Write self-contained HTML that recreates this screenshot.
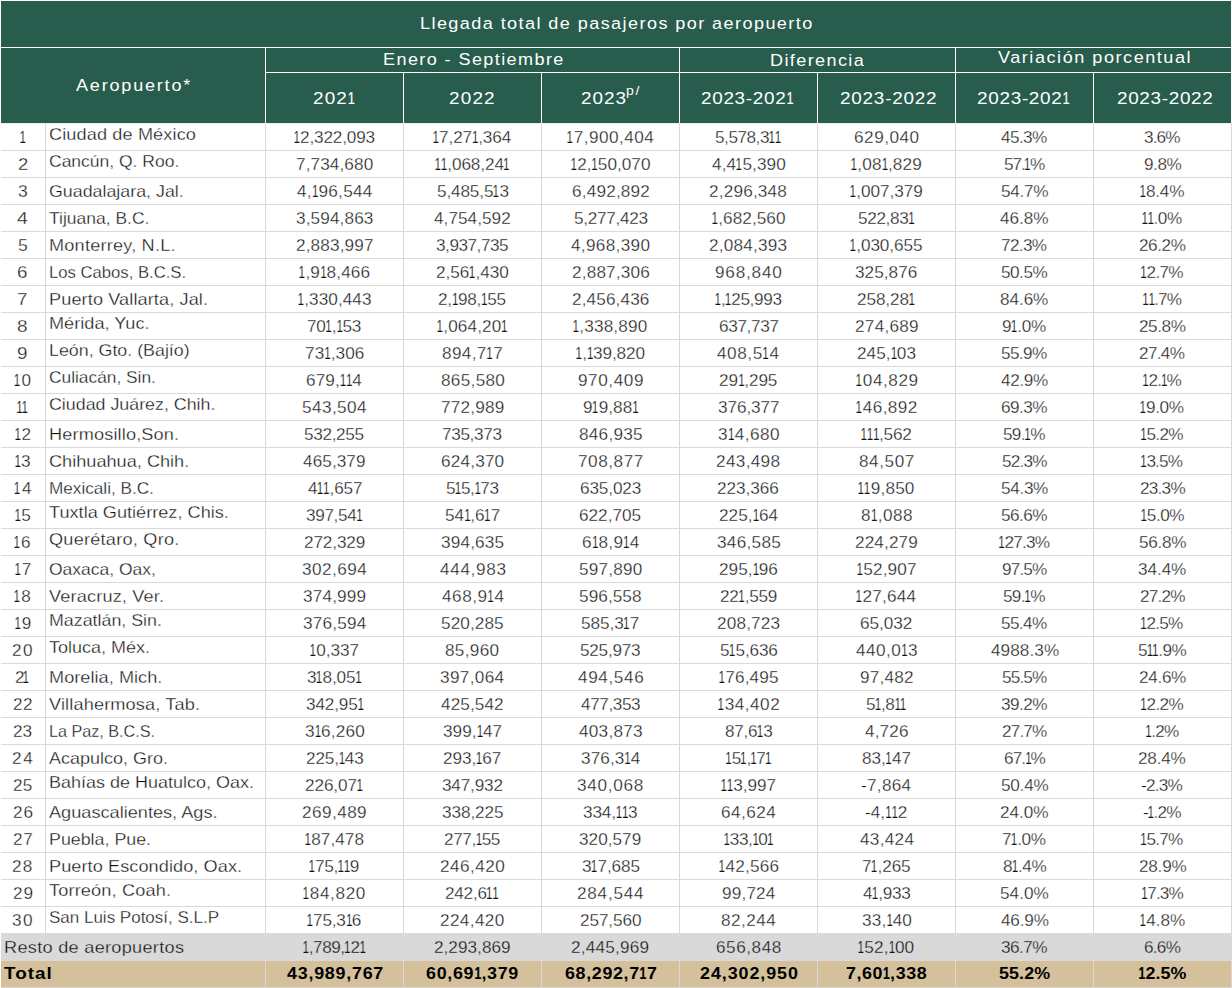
<!DOCTYPE html>
<html lang="es"><head><meta charset="utf-8"><title>Llegada total de pasajeros por aeropuerto</title>
<style>
html,body{margin:0;padding:0;background:#fff}
#t{position:relative;width:1232px;height:988px;overflow:hidden;background:#fff;color:#111111}
#t div{position:absolute}
#t span{position:absolute;white-space:nowrap;line-height:20px;transform-origin:0 50%}
.g{background:#285c4d}.w{background:#fff}.l{background:#d9d9d9}
#t i{display:inline-block;font-style:normal;transform:scaleX(0.68);margin:0 -0.09em 0 -0.105em;-webkit-text-stroke-width:.22px}
#t{font-family:'Liberation Sans',sans-serif}
.head{font-size:17.2px;color:#fff}.sup{font-size:12.5px;color:#fff}
.data,.label{font-size:16.5px;-webkit-text-stroke:0.3px #fff}.label{color:#111111}.rs{-webkit-text-stroke-color:#d9d9d9}.tot,.tlabel{font-size:17.2px;font-weight:bold;color:#000}
</style></head><body>
<div id="t">
<div class="g" style="left:0px;top:0px;width:1232px;height:123px"></div>
<div class="w" style="left:0px;top:0px;width:1232px;height:1px"></div>
<div class="w" style="left:0px;top:0px;width:1px;height:123px"></div>
<div class="w" style="left:1231px;top:0px;width:1px;height:123px"></div>
<div class="w" style="left:0px;top:47px;width:1232px;height:1px"></div>
<div class="w" style="left:265px;top:72px;width:967px;height:1px"></div>
<div class="w" style="left:265px;top:47px;width:1px;height:76px"></div>
<div class="w" style="left:679px;top:47px;width:1px;height:76px"></div>
<div class="w" style="left:955px;top:47px;width:1px;height:76px"></div>
<div class="w" style="left:403px;top:72px;width:1px;height:51px"></div>
<div class="w" style="left:541px;top:72px;width:1px;height:51px"></div>
<div class="w" style="left:817px;top:72px;width:1px;height:51px"></div>
<div class="w" style="left:1093px;top:72px;width:1px;height:51px"></div>
<div style="left:1px;top:123px;width:1230px;height:1px;background:#efefef"></div>
<div class="l" style="left:1px;top:150px;width:1231px;height:1px"></div>
<div class="l" style="left:1px;top:177px;width:1231px;height:1px"></div>
<div class="l" style="left:1px;top:204px;width:1231px;height:1px"></div>
<div class="l" style="left:1px;top:231px;width:1231px;height:1px"></div>
<div class="l" style="left:1px;top:258px;width:1231px;height:1px"></div>
<div class="l" style="left:1px;top:285px;width:1231px;height:1px"></div>
<div class="l" style="left:1px;top:312px;width:1231px;height:1px"></div>
<div class="l" style="left:1px;top:339px;width:1231px;height:1px"></div>
<div class="l" style="left:1px;top:366px;width:1231px;height:1px"></div>
<div class="l" style="left:1px;top:393px;width:1231px;height:1px"></div>
<div class="l" style="left:1px;top:420px;width:1231px;height:1px"></div>
<div class="l" style="left:1px;top:447px;width:1231px;height:1px"></div>
<div class="l" style="left:1px;top:474px;width:1231px;height:1px"></div>
<div class="l" style="left:1px;top:501px;width:1231px;height:1px"></div>
<div class="l" style="left:1px;top:528px;width:1231px;height:1px"></div>
<div class="l" style="left:1px;top:555px;width:1231px;height:1px"></div>
<div class="l" style="left:1px;top:582px;width:1231px;height:1px"></div>
<div class="l" style="left:1px;top:609px;width:1231px;height:1px"></div>
<div class="l" style="left:1px;top:636px;width:1231px;height:1px"></div>
<div class="l" style="left:1px;top:663px;width:1231px;height:1px"></div>
<div class="l" style="left:1px;top:690px;width:1231px;height:1px"></div>
<div class="l" style="left:1px;top:717px;width:1231px;height:1px"></div>
<div class="l" style="left:1px;top:744px;width:1231px;height:1px"></div>
<div class="l" style="left:1px;top:771px;width:1231px;height:1px"></div>
<div class="l" style="left:1px;top:798px;width:1231px;height:1px"></div>
<div class="l" style="left:1px;top:825px;width:1231px;height:1px"></div>
<div class="l" style="left:1px;top:852px;width:1231px;height:1px"></div>
<div class="l" style="left:1px;top:879px;width:1231px;height:1px"></div>
<div class="l" style="left:1px;top:906px;width:1231px;height:1px"></div>
<div class="l" style="left:45px;top:123px;width:1px;height:810px"></div>
<div class="l" style="left:265px;top:123px;width:1px;height:810px"></div>
<div class="l" style="left:403px;top:123px;width:1px;height:810px"></div>
<div class="l" style="left:541px;top:123px;width:1px;height:810px"></div>
<div class="l" style="left:679px;top:123px;width:1px;height:810px"></div>
<div class="l" style="left:817px;top:123px;width:1px;height:810px"></div>
<div class="l" style="left:955px;top:123px;width:1px;height:810px"></div>
<div class="l" style="left:1093px;top:123px;width:1px;height:810px"></div>
<div class="l" style="left:1231px;top:123px;width:1px;height:810px"></div>
<div class="l" style="left:1px;top:933px;width:1231px;height:28px"></div>
<div style="left:1px;top:961px;width:1231px;height:26px;background:#d4c19c"></div>
<div class="l" style="left:265px;top:961px;width:1px;height:26px"></div>
<div class="l" style="left:403px;top:961px;width:1px;height:26px"></div>
<div class="l" style="left:541px;top:961px;width:1px;height:26px"></div>
<div class="l" style="left:679px;top:961px;width:1px;height:26px"></div>
<div class="l" style="left:817px;top:961px;width:1px;height:26px"></div>
<div class="l" style="left:955px;top:961px;width:1px;height:26px"></div>
<div class="l" style="left:1093px;top:961px;width:1px;height:26px"></div>
<div class="l" style="left:1231px;top:961px;width:1px;height:26px"></div>
<div class="l" style="left:1px;top:987px;width:1231px;height:1px"></div>
<span class="head" style="left:420.06px;top:13.34px;letter-spacing:1.36px;transform:scaleX(1.05)">Llegada total de pasajeros por aeropuerto</span>
<span class="head" style="left:76.4px;top:75.14px;letter-spacing:1.71px;transform:scaleX(1.05)">Aeropuerto*</span>
<span class="head" style="left:383.16px;top:49.14px;letter-spacing:1.34px;transform:scaleX(1.05)">Enero - Septiembre</span>
<span class="head" style="left:770.16px;top:50.44px;letter-spacing:1.32px;transform:scaleX(1.05)">Diferencia</span>
<span class="head" style="left:997.91px;top:47.34px;letter-spacing:1.47px;transform:scaleX(1.05)">Variación porcentual</span>
<span class="head" style="left:313.15px;top:88.34px;letter-spacing:1.04px;transform:scaleX(1.1)">202<i>1</i></span>
<span class="head" style="left:449.45px;top:88.34px;letter-spacing:1.07px;transform:scaleX(1.1)">2022</span>
<span class="head" style="left:581.35px;top:88.34px;letter-spacing:0.92px;transform:scaleX(1.1)">2023</span>
<span class="sup" style="left:625.99px;top:81.07px;letter-spacing:1.42px;transform:scaleX(1.12)">p/</span>
<span class="head" style="left:701.35px;top:88.34px;letter-spacing:0.62px;transform:scaleX(1.1)">2023-202<i>1</i></span>
<span class="head" style="left:840.45px;top:88.34px;letter-spacing:0.7px;transform:scaleX(1.1)">2023-2022</span>
<span class="head" style="left:977.25px;top:88.34px;letter-spacing:0.64px;transform:scaleX(1.1)">2023-202<i>1</i></span>
<span class="head" style="left:1116.75px;top:88.34px;letter-spacing:0.61px;transform:scaleX(1.1)">2023-2022</span>
<span class="data" style="left:19.62px;top:127.28px;transform:scaleX(1.04)"><i>1</i></span>
<span class="label" style="left:48.79px;top:124.28px;letter-spacing:0.1px;transform:scaleX(1.1)">Ciudad de México</span>
<span class="data" style="left:294.01px;top:127.28px;letter-spacing:-0.16px;transform:scaleX(1.04)"><i>1</i>2,322,093</span>
<span class="data" style="left:433.29px;top:127.28px;letter-spacing:-0.11px;transform:scaleX(1.04)"><i>1</i>7,27<i>1</i>,364</span>
<span class="data" style="left:567.04px;top:127.28px;letter-spacing:0.45px;transform:scaleX(1.04)"><i>1</i>7,900,404</span>
<span class="data" style="left:715.43px;top:127.28px;letter-spacing:-0.45px;transform:scaleX(1.04)">5,578,3<i>1</i><i>1</i></span>
<span class="data" style="left:853.8px;top:127.28px;letter-spacing:0.5px;transform:scaleX(1.04)">629,040</span>
<span class="data" style="left:1001.47px;top:127.28px;letter-spacing:-0.57px;transform:scaleX(1.04)">45.3%</span>
<span class="data" style="left:1144.2px;top:127.28px;letter-spacing:-0.84px;transform:scaleX(1.04)">3.6%</span>
<span class="data" style="left:17.57px;top:154.28px;transform:scaleX(1.12)">2</span>
<span class="label" style="left:48.82px;top:151.28px;transform:scaleX(1.06)">Cancún, Q. Roo.</span>
<span class="data" style="left:295.77px;top:154.28px;letter-spacing:0.1px;transform:scaleX(1.04)">7,734,680</span>
<span class="data" style="left:434.9px;top:154.28px;letter-spacing:-0.09px;transform:scaleX(1.04)"><i>1</i><i>1</i>,068,24<i>1</i></span>
<span class="data" style="left:570.79px;top:154.28px;letter-spacing:0.02px;transform:scaleX(1.04)"><i>1</i>2,<i>1</i>50,070</span>
<span class="data" style="left:711.77px;top:154.28px;letter-spacing:0.08px;transform:scaleX(1.04)">4,4<i>1</i>5,390</span>
<span class="data" style="left:851.25px;top:154.28px;letter-spacing:0.12px;transform:scaleX(1.04)"><i>1</i>,08<i>1</i>,829</span>
<span class="data" style="left:1003.85px;top:154.28px;letter-spacing:-0.99px;transform:scaleX(1.04)">57.<i>1</i>%</span>
<span class="data" style="left:1143.5px;top:154.28px;letter-spacing:-0.41px;transform:scaleX(1.04)">9.8%</span>
<span class="data" style="left:17.83px;top:181.28px;transform:scaleX(1.06)">3</span>
<span class="label" style="left:48.81px;top:181.28px;transform:scaleX(1.08)">Guadalajara, Jal.</span>
<span class="data" style="left:296.87px;top:181.28px;letter-spacing:0.28px;transform:scaleX(1.04)">4,<i>1</i>96,544</span>
<span class="data" style="left:436.54px;top:181.28px;letter-spacing:-0.13px;transform:scaleX(1.04)">5,485,5<i>1</i>3</span>
<span class="data" style="left:571.61px;top:181.28px;letter-spacing:0.18px;transform:scaleX(1.04)">6,492,892</span>
<span class="data" style="left:709.49px;top:181.28px;letter-spacing:0.18px;transform:scaleX(1.04)">2,296,348</span>
<span class="data" style="left:850.22px;top:181.28px;letter-spacing:-0.03px;transform:scaleX(1.04)"><i>1</i>,007,379</span>
<span class="data" style="left:1000.67px;top:181.28px;letter-spacing:-0.27px;transform:scaleX(1.04)">54.7%</span>
<span class="data" style="left:1140.28px;top:181.28px;letter-spacing:-0.22px;transform:scaleX(1.04)"><i>1</i>8.4%</span>
<span class="data" style="left:17.27px;top:208.28px;transform:scaleX(1.19)">4</span>
<span class="label" style="left:48.95px;top:208.28px;transform:scaleX(1.06)">Tijuana, B.C.</span>
<span class="data" style="left:295.82px;top:208.28px;letter-spacing:0.12px;transform:scaleX(1.04)">3,594,863</span>
<span class="data" style="left:434.41px;top:208.28px;letter-spacing:0.04px;transform:scaleX(1.04)">4,754,592</span>
<span class="data" style="left:573.51px;top:208.28px;letter-spacing:-0.28px;transform:scaleX(1.04)">5,277,423</span>
<span class="data" style="left:711.81px;top:208.28px;letter-spacing:0.05px;transform:scaleX(1.04)"><i>1</i>,682,560</span>
<span class="data" style="left:858.09px;top:208.28px;letter-spacing:-0.33px;transform:scaleX(1.04)">522,83<i>1</i></span>
<span class="data" style="left:1000.4px;top:208.28px;letter-spacing:-0.05px;transform:scaleX(1.04)">46.8%</span>
<span class="data" style="left:1142.39px;top:208.28px;letter-spacing:-0.44px;transform:scaleX(1.04)"><i>1</i><i>1</i>.0%</span>
<span class="data" style="left:17.78px;top:235.28px;transform:scaleX(1.07)">5</span>
<span class="label" style="left:49.15px;top:235.28px;letter-spacing:0.18px;transform:scaleX(1.1)">Monterrey, N.L.</span>
<span class="data" style="left:295.77px;top:235.28px;letter-spacing:0.14px;transform:scaleX(1.04)">2,883,997</span>
<span class="data" style="left:436.21px;top:235.28px;letter-spacing:-0.45px;transform:scaleX(1.04)">3,937,735</span>
<span class="data" style="left:571.18px;top:235.28px;letter-spacing:0.31px;transform:scaleX(1.04)">4,968,390</span>
<span class="data" style="left:709.36px;top:235.28px;letter-spacing:0.21px;transform:scaleX(1.04)">2,084,393</span>
<span class="data" style="left:850.26px;top:235.28px;letter-spacing:-0.05px;transform:scaleX(1.04)"><i>1</i>,030,655</span>
<span class="data" style="left:1001.33px;top:235.28px;letter-spacing:-0.62px;transform:scaleX(1.04)">72.3%</span>
<span class="data" style="left:1138.91px;top:235.28px;letter-spacing:-0.42px;transform:scaleX(1.04)">26.2%</span>
<span class="data" style="left:17.39px;top:262.28px;transform:scaleX(1.14)">6</span>
<span class="label" style="left:49.27px;top:262.28px;transform:scaleX(1.01)">Los Cabos, B.C.S.</span>
<span class="data" style="left:299px;top:262.28px;letter-spacing:0.17px;transform:scaleX(1.04)"><i>1</i>,9<i>1</i>8,466</span>
<span class="data" style="left:435.96px;top:262.28px;letter-spacing:-0.02px;transform:scaleX(1.04)">2,56<i>1</i>,430</span>
<span class="data" style="left:571.53px;top:262.28px;letter-spacing:0.17px;transform:scaleX(1.04)">2,887,306</span>
<span class="data" style="left:715.02px;top:262.28px;letter-spacing:0.76px;transform:scaleX(1.04)">968,840</span>
<span class="data" style="left:855.37px;top:262.28px;letter-spacing:0.04px;transform:scaleX(1.04)">325,876</span>
<span class="data" style="left:1001.08px;top:262.28px;letter-spacing:-0.47px;transform:scaleX(1.04)">50.5%</span>
<span class="data" style="left:1141.19px;top:262.28px;letter-spacing:-0.66px;transform:scaleX(1.04)"><i>1</i>2.7%</span>
<span class="data" style="left:17.47px;top:289.28px;transform:scaleX(1.14)">7</span>
<span class="label" style="left:49.15px;top:289.28px;letter-spacing:0.09px;transform:scaleX(1.1)">Puerto Vallarta, Jal.</span>
<span class="data" style="left:297.85px;top:289.28px;letter-spacing:0.05px;transform:scaleX(1.04)"><i>1</i>,330,443</span>
<span class="data" style="left:438.39px;top:289.28px;letter-spacing:-0.2px;transform:scaleX(1.04)">2,<i>1</i>98,<i>1</i>55</span>
<span class="data" style="left:571.77px;top:289.28px;letter-spacing:0.12px;transform:scaleX(1.04)">2,456,436</span>
<span class="data" style="left:715.06px;top:289.28px;letter-spacing:-0.33px;transform:scaleX(1.04)"><i>1</i>,<i>1</i>25,993</span>
<span class="data" style="left:857.26px;top:289.28px;letter-spacing:-0.09px;transform:scaleX(1.04)">258,28<i>1</i></span>
<span class="data" style="left:1000.26px;top:289.28px;letter-spacing:-0.07px;transform:scaleX(1.04)">84.6%</span>
<span class="data" style="left:1143.01px;top:289.28px;letter-spacing:-0.73px;transform:scaleX(1.04)"><i>1</i><i>1</i>.7%</span>
<span class="data" style="left:17.45px;top:316.28px;transform:scaleX(1.15)">8</span>
<span class="label" style="left:49.15px;top:313.28px;transform:scaleX(1.1)">Mérida, Yuc.</span>
<span class="data" style="left:307.24px;top:316.28px;letter-spacing:-0.17px;transform:scaleX(1.04)">70<i>1</i>,<i>1</i>53</span>
<span class="data" style="left:437.21px;top:316.28px;letter-spacing:0.1px;transform:scaleX(1.04)"><i>1</i>,064,20<i>1</i></span>
<span class="data" style="left:573.39px;top:316.28px;letter-spacing:0.14px;transform:scaleX(1.04)"><i>1</i>,338,890</span>
<span class="data" style="left:718.52px;top:316.28px;letter-spacing:-0.33px;transform:scaleX(1.04)">637,737</span>
<span class="data" style="left:854.62px;top:316.28px;letter-spacing:0.26px;transform:scaleX(1.04)">274,689</span>
<span class="data" style="left:1002.32px;top:316.28px;letter-spacing:-0.28px;transform:scaleX(1.04)">9<i>1</i>.0%</span>
<span class="data" style="left:1138.91px;top:316.28px;letter-spacing:-0.42px;transform:scaleX(1.04)">25.8%</span>
<span class="data" style="left:17.48px;top:343.28px;transform:scaleX(1.14)">9</span>
<span class="label" style="left:49.18px;top:340.28px;transform:scaleX(1.08)">León, Gto. (Bajío)</span>
<span class="data" style="left:304.73px;top:343.28px;letter-spacing:0.11px;transform:scaleX(1.04)">73<i>1</i>,306</span>
<span class="data" style="left:442.15px;top:343.28px;letter-spacing:0.35px;transform:scaleX(1.04)">894,7<i>1</i>7</span>
<span class="data" style="left:575.99px;top:343.28px;letter-spacing:-0.08px;transform:scaleX(1.04)"><i>1</i>,<i>1</i>39,820</span>
<span class="data" style="left:717.47px;top:343.28px;letter-spacing:0.55px;transform:scaleX(1.04)">408,5<i>1</i>4</span>
<span class="data" style="left:856.93px;top:343.28px;letter-spacing:0.04px;transform:scaleX(1.04)">245,<i>1</i>03</span>
<span class="data" style="left:1001.37px;top:343.28px;letter-spacing:-0.6px;transform:scaleX(1.04)">55.9%</span>
<span class="data" style="left:1139.37px;top:343.28px;letter-spacing:-0.64px;transform:scaleX(1.04)">27.4%</span>
<span class="data" style="left:14.18px;top:370.28px;letter-spacing:1.23px;transform:scaleX(1.04)"><i>1</i>0</span>
<span class="label" style="left:48.83px;top:367.28px;transform:scaleX(1.05)">Culiacán, Sin.</span>
<span class="data" style="left:306.33px;top:370.28px;letter-spacing:0.08px;transform:scaleX(1.04)">679,<i>1</i><i>1</i>4</span>
<span class="data" style="left:440.5px;top:370.28px;letter-spacing:0.3px;transform:scaleX(1.04)">865,580</span>
<span class="data" style="left:577.76px;top:370.28px;letter-spacing:0.55px;transform:scaleX(1.04)">970,409</span>
<span class="data" style="left:719.22px;top:370.28px;letter-spacing:-0.05px;transform:scaleX(1.04)">29<i>1</i>,295</span>
<span class="data" style="left:855.54px;top:370.28px;letter-spacing:0.55px;transform:scaleX(1.04)"><i>1</i>04,829</span>
<span class="data" style="left:1000.97px;top:370.28px;letter-spacing:-0.33px;transform:scaleX(1.04)">42.9%</span>
<span class="data" style="left:1143.09px;top:370.28px;letter-spacing:-0.77px;transform:scaleX(1.04)"><i>1</i>2.<i>1</i>%</span>
<span class="data" style="left:17.15px;top:397.28px;letter-spacing:-1.37px;transform:scaleX(1.04)"><i>1</i><i>1</i></span>
<span class="label" style="left:48.81px;top:394.28px;transform:scaleX(1.08)">Ciudad Juárez, Chih.</span>
<span class="data" style="left:302.09px;top:397.28px;letter-spacing:0.41px;transform:scaleX(1.04)">543,504</span>
<span class="data" style="left:440.75px;top:397.28px;letter-spacing:0.22px;transform:scaleX(1.04)">772,989</span>
<span class="data" style="left:582.63px;top:397.28px;letter-spacing:0.01px;transform:scaleX(1.04)">9<i>1</i>9,88<i>1</i></span>
<span class="data" style="left:717.78px;top:397.28px;letter-spacing:-0.07px;transform:scaleX(1.04)">376,377</span>
<span class="data" style="left:855.95px;top:397.28px;letter-spacing:0.43px;transform:scaleX(1.04)"><i>1</i>46,892</span>
<span class="data" style="left:1001.16px;top:397.28px;letter-spacing:-0.54px;transform:scaleX(1.04)">69.3%</span>
<span class="data" style="left:1140.45px;top:397.28px;letter-spacing:-0.3px;transform:scaleX(1.04)"><i>1</i>9.0%</span>
<span class="data" style="left:14.84px;top:424.28px;letter-spacing:0.21px;transform:scaleX(1.04)"><i>1</i>2</span>
<span class="label" style="left:49.15px;top:424.28px;letter-spacing:0.13px;transform:scaleX(1.1)">Hermosillo,Son.</span>
<span class="data" style="left:304.44px;top:424.28px;letter-spacing:-0.31px;transform:scaleX(1.04)">532,255</span>
<span class="data" style="left:442.44px;top:424.28px;letter-spacing:-0.33px;transform:scaleX(1.04)">735,373</span>
<span class="data" style="left:578.71px;top:424.28px;letter-spacing:0.25px;transform:scaleX(1.04)">846,935</span>
<span class="data" style="left:717.66px;top:424.28px;letter-spacing:0.46px;transform:scaleX(1.04)">3<i>1</i>4,680</span>
<span class="data" style="left:861.23px;top:424.28px;letter-spacing:-0.2px;transform:scaleX(1.04)"><i>1</i><i>1</i><i>1</i>,562</span>
<span class="data" style="left:1003.23px;top:424.28px;letter-spacing:-0.7px;transform:scaleX(1.04)">59.<i>1</i>%</span>
<span class="data" style="left:1141.23px;top:424.28px;letter-spacing:-0.68px;transform:scaleX(1.04)"><i>1</i>5.2%</span>
<span class="data" style="left:14.96px;top:451.28px;letter-spacing:-0.19px;transform:scaleX(1.04)"><i>1</i>3</span>
<span class="label" style="left:48.79px;top:451.28px;transform:scaleX(1.1)">Chihuahua, Chih.</span>
<span class="data" style="left:303.47px;top:451.28px;letter-spacing:0.08px;transform:scaleX(1.04)">465,379</span>
<span class="data" style="left:440.79px;top:451.28px;letter-spacing:0.18px;transform:scaleX(1.04)">624,370</span>
<span class="data" style="left:577.88px;top:451.28px;letter-spacing:0.52px;transform:scaleX(1.04)">708,877</span>
<span class="data" style="left:716.42px;top:451.28px;letter-spacing:0.32px;transform:scaleX(1.04)">243,498</span>
<span class="data" style="left:858.96px;top:451.28px;letter-spacing:0.54px;transform:scaleX(1.04)">84,507</span>
<span class="data" style="left:1001.66px;top:451.28px;letter-spacing:-0.74px;transform:scaleX(1.04)">52.3%</span>
<span class="data" style="left:1141.48px;top:451.28px;letter-spacing:-0.8px;transform:scaleX(1.04)"><i>1</i>3.5%</span>
<span class="data" style="left:13.85px;top:478.28px;letter-spacing:1.7px;transform:scaleX(1.04)"><i>1</i>4</span>
<span class="label" style="left:49.23px;top:478.28px;transform:scaleX(1.04)">Mexicali, B.C.</span>
<span class="data" style="left:307.51px;top:478.28px;letter-spacing:-0.14px;transform:scaleX(1.04)">4<i>1</i><i>1</i>,657</span>
<span class="data" style="left:445.99px;top:478.28px;letter-spacing:-0.38px;transform:scaleX(1.04)">5<i>1</i>5,<i>1</i>73</span>
<span class="data" style="left:579.74px;top:478.28px;letter-spacing:-0.11px;transform:scaleX(1.04)">635,023</span>
<span class="data" style="left:717.49px;top:478.28px;letter-spacing:-0.03px;transform:scaleX(1.04)">223,366</span>
<span class="data" style="left:858.3px;top:478.28px;letter-spacing:0.16px;transform:scaleX(1.04)"><i>1</i><i>1</i>9,850</span>
<span class="data" style="left:1000.75px;top:478.28px;letter-spacing:-0.31px;transform:scaleX(1.04)">54.3%</span>
<span class="data" style="left:1139.53px;top:478.28px;letter-spacing:-0.72px;transform:scaleX(1.04)">23.3%</span>
<span class="data" style="left:14.84px;top:505.28px;letter-spacing:0.05px;transform:scaleX(1.04)"><i>1</i>5</span>
<span class="label" style="left:48.94px;top:502.28px;transform:scaleX(1.1)">Tuxtla Gutiérrez, Chis.</span>
<span class="data" style="left:306.13px;top:505.28px;letter-spacing:-0.34px;transform:scaleX(1.04)">397,54<i>1</i></span>
<span class="data" style="left:444.88px;top:505.28px;transform:scaleX(1.04)">54<i>1</i>,6<i>1</i>7</span>
<span class="data" style="left:579.41px;top:505.28px;transform:scaleX(1.04)">622,705</span>
<span class="data" style="left:718.77px;top:505.28px;letter-spacing:0.05px;transform:scaleX(1.04)">225,<i>1</i>64</span>
<span class="data" style="left:860.69px;top:505.28px;letter-spacing:0.47px;transform:scaleX(1.04)">8<i>1</i>,088</span>
<span class="data" style="left:1001.17px;top:505.28px;letter-spacing:-0.51px;transform:scaleX(1.04)">56.6%</span>
<span class="data" style="left:1140.7px;top:505.28px;letter-spacing:-0.42px;transform:scaleX(1.04)"><i>1</i>5.0%</span>
<span class="data" style="left:14.43px;top:532.28px;letter-spacing:0.84px;transform:scaleX(1.04)"><i>1</i>6</span>
<span class="label" style="left:48.88px;top:529.28px;letter-spacing:0.21px;transform:scaleX(1.1)">Querétaro, Qro.</span>
<span class="data" style="left:303.78px;top:532.28px;letter-spacing:-0.11px;transform:scaleX(1.04)">272,329</span>
<span class="data" style="left:440.96px;top:532.28px;letter-spacing:0.17px;transform:scaleX(1.04)">394,635</span>
<span class="data" style="left:581.59px;top:532.28px;letter-spacing:0.32px;transform:scaleX(1.04)">6<i>1</i>8,9<i>1</i>4</span>
<span class="data" style="left:716.63px;top:532.28px;letter-spacing:0.28px;transform:scaleX(1.04)">346,585</span>
<span class="data" style="left:855.03px;top:532.28px;letter-spacing:0.13px;transform:scaleX(1.04)">224,279</span>
<span class="data" style="left:998.98px;top:532.28px;letter-spacing:-0.75px;transform:scaleX(1.04)"><i>1</i>27.3%</span>
<span class="data" style="left:1138.67px;top:532.28px;letter-spacing:-0.27px;transform:scaleX(1.04)">56.8%</span>
<span class="data" style="left:14.67px;top:559.28px;letter-spacing:0.53px;transform:scaleX(1.04)"><i>1</i>7</span>
<span class="label" style="left:48.92px;top:559.28px;transform:scaleX(1.06)">Oaxaca, Oax,</span>
<span class="data" style="left:301.93px;top:559.28px;letter-spacing:0.46px;transform:scaleX(1.04)">302,694</span>
<span class="data" style="left:439.69px;top:559.28px;letter-spacing:0.63px;transform:scaleX(1.04)">444,983</span>
<span class="data" style="left:578.75px;top:559.28px;letter-spacing:0.22px;transform:scaleX(1.04)">597,890</span>
<span class="data" style="left:718.97px;top:559.28px;letter-spacing:0.03px;transform:scaleX(1.04)">295,<i>1</i>96</span>
<span class="data" style="left:856.9px;top:559.28px;letter-spacing:0.12px;transform:scaleX(1.04)"><i>1</i>52,907</span>
<span class="data" style="left:1001.74px;top:559.28px;letter-spacing:-0.8px;transform:scaleX(1.04)">97.5%</span>
<span class="data" style="left:1138.26px;top:559.28px;letter-spacing:-0.07px;transform:scaleX(1.04)">34.4%</span>
<span class="data" style="left:14.34px;top:586.28px;letter-spacing:1px;transform:scaleX(1.04)"><i>1</i>8</span>
<span class="label" style="left:49.21px;top:586.28px;letter-spacing:0.14px;transform:scaleX(1.1)">Veracruz, Ver.</span>
<span class="data" style="left:303px;top:586.28px;letter-spacing:0.17px;transform:scaleX(1.04)">374,999</span>
<span class="data" style="left:441.55px;top:586.28px;letter-spacing:0.53px;transform:scaleX(1.04)">468,9<i>1</i>4</span>
<span class="data" style="left:579.25px;top:586.28px;letter-spacing:0.08px;transform:scaleX(1.04)">596,558</span>
<span class="data" style="left:719.8px;top:586.28px;letter-spacing:-0.22px;transform:scaleX(1.04)">22<i>1</i>,559</span>
<span class="data" style="left:856.41px;top:586.28px;letter-spacing:0.21px;transform:scaleX(1.04)"><i>1</i>27,644</span>
<span class="data" style="left:1003.23px;top:586.28px;letter-spacing:-0.7px;transform:scaleX(1.04)">59.<i>1</i>%</span>
<span class="data" style="left:1139.61px;top:586.28px;letter-spacing:-0.76px;transform:scaleX(1.04)">27.2%</span>
<span class="data" style="left:14.59px;top:613.28px;letter-spacing:0.6px;transform:scaleX(1.04)"><i>1</i>9</span>
<span class="label" style="left:49.17px;top:610.28px;transform:scaleX(1.08)">Mazatlán, Sin.</span>
<span class="data" style="left:302.75px;top:613.28px;letter-spacing:0.19px;transform:scaleX(1.04)">376,594</span>
<span class="data" style="left:441.16px;top:613.28px;letter-spacing:0.1px;transform:scaleX(1.04)">520,285</span>
<span class="data" style="left:581.39px;top:613.28px;letter-spacing:-0.05px;transform:scaleX(1.04)">585,3<i>1</i>7</span>
<span class="data" style="left:716.87px;top:613.28px;letter-spacing:0.17px;transform:scaleX(1.04)">208,723</span>
<span class="data" style="left:860.36px;top:613.28px;letter-spacing:-0.03px;transform:scaleX(1.04)">65,032</span>
<span class="data" style="left:1001.33px;top:613.28px;letter-spacing:-0.59px;transform:scaleX(1.04)">55.4%</span>
<span class="data" style="left:1141.4px;top:613.28px;letter-spacing:-0.76px;transform:scaleX(1.04)"><i>1</i>2.5%</span>
<span class="data" style="left:12.31px;top:640.28px;letter-spacing:1.39px;transform:scaleX(1.04)">20</span>
<span class="label" style="left:48.94px;top:637.28px;transform:scaleX(1.09)">Toluca, Méx.</span>
<span class="data" style="left:310.1px;top:640.28px;letter-spacing:-0.02px;transform:scaleX(1.04)"><i>1</i>0,337</span>
<span class="data" style="left:445.41px;top:640.28px;letter-spacing:0.31px;transform:scaleX(1.04)">85,960</span>
<span class="data" style="left:580.24px;top:640.28px;letter-spacing:-0.24px;transform:scaleX(1.04)">525,973</span>
<span class="data" style="left:719.56px;top:640.28px;letter-spacing:-0.13px;transform:scaleX(1.04)">5<i>1</i>5,636</span>
<span class="data" style="left:855.88px;top:640.28px;letter-spacing:0.46px;transform:scaleX(1.04)">440,0<i>1</i>3</span>
<span class="data" style="left:990.54px;top:640.28px;letter-spacing:0.07px;transform:scaleX(1.04)">4988.3%</span>
<span class="data" style="left:1138.05px;top:640.28px;letter-spacing:-0.54px;transform:scaleX(1.04)">5<i>1</i><i>1</i>.9%</span>
<span class="data" style="left:15.24px;top:667.28px;letter-spacing:-1.15px;transform:scaleX(1.04)">2<i>1</i></span>
<span class="label" style="left:49.15px;top:667.28px;letter-spacing:0.03px;transform:scaleX(1.1)">Morelia, Mich.</span>
<span class="data" style="left:307.08px;top:667.28px;letter-spacing:-0.12px;transform:scaleX(1.04)">3<i>1</i>8,05<i>1</i></span>
<span class="data" style="left:440.34px;top:667.28px;letter-spacing:0.33px;transform:scaleX(1.04)">397,064</span>
<span class="data" style="left:577.82px;top:667.28px;letter-spacing:0.59px;transform:scaleX(1.04)">494,546</span>
<span class="data" style="left:718.78px;top:667.28px;letter-spacing:0.13px;transform:scaleX(1.04)"><i>1</i>76,495</span>
<span class="data" style="left:859.78px;top:667.28px;letter-spacing:0.2px;transform:scaleX(1.04)">97,482</span>
<span class="data" style="left:1001.83px;top:667.28px;letter-spacing:-0.82px;transform:scaleX(1.04)">55.5%</span>
<span class="data" style="left:1138.67px;top:667.28px;letter-spacing:-0.31px;transform:scaleX(1.04)">24.6%</span>
<span class="data" style="left:12.93px;top:694.28px;letter-spacing:0.44px;transform:scaleX(1.04)">22</span>
<span class="label" style="left:49.21px;top:694.28px;letter-spacing:0.13px;transform:scaleX(1.1)">Villahermosa, Tab.</span>
<span class="data" style="left:305.52px;top:694.28px;letter-spacing:-0.15px;transform:scaleX(1.04)">342,95<i>1</i></span>
<span class="data" style="left:441.47px;top:694.28px;letter-spacing:0.09px;transform:scaleX(1.04)">425,542</span>
<span class="data" style="left:580.87px;top:694.28px;letter-spacing:-0.39px;transform:scaleX(1.04)">477,353</span>
<span class="data" style="left:717.79px;top:694.28px;letter-spacing:0.48px;transform:scaleX(1.04)"><i>1</i>34,402</span>
<span class="data" style="left:866.18px;top:694.28px;letter-spacing:-0.4px;transform:scaleX(1.04)">5<i>1</i>,8<i>1</i><i>1</i></span>
<span class="data" style="left:1001.21px;top:694.28px;letter-spacing:-0.53px;transform:scaleX(1.04)">39.2%</span>
<span class="data" style="left:1141.11px;top:694.28px;letter-spacing:-0.62px;transform:scaleX(1.04)"><i>1</i>2.2%</span>
<span class="data" style="left:13.06px;top:721.28px;letter-spacing:0.04px;transform:scaleX(1.04)">23</span>
<span class="label" style="left:49.3px;top:721.28px;transform:scaleX(0.98)">La Paz, B.C.S.</span>
<span class="data" style="left:304.61px;top:721.28px;letter-spacing:0.16px;transform:scaleX(1.04)">3<i>1</i>6,260</span>
<span class="data" style="left:443.06px;top:721.28px;letter-spacing:0.05px;transform:scaleX(1.04)">399,<i>1</i>47</span>
<span class="data" style="left:578.89px;top:721.28px;letter-spacing:0.25px;transform:scaleX(1.04)">403,873</span>
<span class="data" style="left:724.59px;top:721.28px;letter-spacing:-0.26px;transform:scaleX(1.04)">87,6<i>1</i>3</span>
<span class="data" style="left:864.91px;top:721.28px;letter-spacing:0.14px;transform:scaleX(1.04)">4,726</span>
<span class="data" style="left:1001.7px;top:721.28px;letter-spacing:-0.8px;transform:scaleX(1.04)">27.7%</span>
<span class="data" style="left:1145.89px;top:721.28px;letter-spacing:-0.83px;transform:scaleX(1.04)"><i>1</i>.2%</span>
<span class="data" style="left:12.15px;top:748.28px;letter-spacing:1.54px;transform:scaleX(1.04)">24</span>
<span class="label" style="left:49.3px;top:748.28px;transform:scaleX(1.09)">Acapulco, Gro.</span>
<span class="data" style="left:305.55px;top:748.28px;letter-spacing:-0.16px;transform:scaleX(1.04)">225,<i>1</i>43</span>
<span class="data" style="left:443.39px;top:748.28px;letter-spacing:-0.08px;transform:scaleX(1.04)">293,<i>1</i>67</span>
<span class="data" style="left:580.73px;top:748.28px;letter-spacing:0.09px;transform:scaleX(1.04)">376,3<i>1</i>4</span>
<span class="data" style="left:725.71px;top:748.28px;letter-spacing:-0.52px;transform:scaleX(1.04)"><i>1</i>5<i>1</i>,<i>1</i>7<i>1</i></span>
<span class="data" style="left:862.05px;top:748.28px;letter-spacing:-0.02px;transform:scaleX(1.04)">83,<i>1</i>47</span>
<span class="data" style="left:1003.51px;top:748.28px;letter-spacing:-0.87px;transform:scaleX(1.04)">67.<i>1</i>%</span>
<span class="data" style="left:1138.42px;top:748.28px;letter-spacing:-0.19px;transform:scaleX(1.04)">28.4%</span>
<span class="data" style="left:12.93px;top:775.28px;letter-spacing:0.28px;transform:scaleX(1.04)">25</span>
<span class="label" style="left:49.16px;top:772.28px;transform:scaleX(1.09)">Bahías de Huatulco, Oax.</span>
<span class="data" style="left:305.3px;top:775.28px;letter-spacing:-0.1px;transform:scaleX(1.04)">226,07<i>1</i></span>
<span class="data" style="left:442.11px;top:775.28px;letter-spacing:-0.17px;transform:scaleX(1.04)">347,932</span>
<span class="data" style="left:577.39px;top:775.28px;letter-spacing:0.67px;transform:scaleX(1.04)">340,068</span>
<span class="data" style="left:721.09px;top:775.28px;letter-spacing:-0.05px;transform:scaleX(1.04)"><i>1</i><i>1</i>3,997</span>
<span class="data" style="left:861.27px;top:775.28px;letter-spacing:0.28px;transform:scaleX(1.04)">-7,864</span>
<span class="data" style="left:1000.59px;top:775.28px;letter-spacing:-0.23px;transform:scaleX(1.04)">50.4%</span>
<span class="data" style="left:1141.47px;top:775.28px;letter-spacing:-0.71px;transform:scaleX(1.04)">-2.3%</span>
<span class="data" style="left:12.56px;top:802.28px;letter-spacing:0.99px;transform:scaleX(1.04)">26</span>
<span class="label" style="left:49.4px;top:802.28px;transform:scaleX(1.1)">Aguascalientes, Ags.</span>
<span class="data" style="left:302.13px;top:802.28px;letter-spacing:0.42px;transform:scaleX(1.04)">269,489</span>
<span class="data" style="left:441.7px;top:802.28px;letter-spacing:-0.07px;transform:scaleX(1.04)">338,225</span>
<span class="data" style="left:583.17px;top:802.28px;letter-spacing:-0.12px;transform:scaleX(1.04)">334,<i>1</i><i>1</i>3</span>
<span class="data" style="left:720.87px;top:802.28px;letter-spacing:0.45px;transform:scaleX(1.04)">64,624</span>
<span class="data" style="left:865.39px;top:802.28px;letter-spacing:0.05px;transform:scaleX(1.04)">-4,<i>1</i><i>1</i>2</span>
<span class="data" style="left:1000.05px;top:802.28px;letter-spacing:-0.01px;transform:scaleX(1.04)">24.0%</span>
<span class="data" style="left:1143.12px;top:802.28px;letter-spacing:-0.71px;transform:scaleX(1.04)">-<i>1</i>.2%</span>
<span class="data" style="left:12.81px;top:829.28px;letter-spacing:0.68px;transform:scaleX(1.04)">27</span>
<span class="label" style="left:49.17px;top:829.28px;transform:scaleX(1.08)">Puebla, Pue.</span>
<span class="data" style="left:305.07px;top:829.28px;letter-spacing:0.04px;transform:scaleX(1.04)"><i>1</i>87,478</span>
<span class="data" style="left:444.21px;top:829.28px;letter-spacing:-0.37px;transform:scaleX(1.04)">277,<i>1</i>55</span>
<span class="data" style="left:579.45px;top:829.28px;letter-spacing:0.03px;transform:scaleX(1.04)">320,579</span>
<span class="data" style="left:723.6px;top:829.28px;letter-spacing:-0.38px;transform:scaleX(1.04)"><i>1</i>33,<i>1</i>0<i>1</i></span>
<span class="data" style="left:859.55px;top:829.28px;letter-spacing:0.29px;transform:scaleX(1.04)">43,424</span>
<span class="data" style="left:1002.32px;top:829.28px;letter-spacing:-0.3px;transform:scaleX(1.04)">7<i>1</i>.0%</span>
<span class="data" style="left:1141.32px;top:829.28px;letter-spacing:-0.72px;transform:scaleX(1.04)"><i>1</i>5.7%</span>
<span class="data" style="left:12.44px;top:856.28px;letter-spacing:1.23px;transform:scaleX(1.04)">28</span>
<span class="label" style="left:49.15px;top:856.28px;letter-spacing:0.06px;transform:scaleX(1.1)">Puerto Escondido, Oax.</span>
<span class="data" style="left:309.4px;top:856.28px;letter-spacing:-0.27px;transform:scaleX(1.04)"><i>1</i>75,<i>1</i><i>1</i>9</span>
<span class="data" style="left:439.96px;top:856.28px;letter-spacing:0.45px;transform:scaleX(1.04)">246,420</span>
<span class="data" style="left:581.52px;top:856.28px;letter-spacing:-0.12px;transform:scaleX(1.04)">3<i>1</i>7,685</span>
<span class="data" style="left:718.57px;top:856.28px;letter-spacing:0.2px;transform:scaleX(1.04)"><i>1</i>42,566</span>
<span class="data" style="left:862.09px;top:856.28px;letter-spacing:-0.1px;transform:scaleX(1.04)">7<i>1</i>,265</span>
<span class="data" style="left:1002.57px;top:856.28px;letter-spacing:-0.38px;transform:scaleX(1.04)">8<i>1</i>.4%</span>
<span class="data" style="left:1138.5px;top:856.28px;letter-spacing:-0.23px;transform:scaleX(1.04)">28.9%</span>
<span class="data" style="left:12.68px;top:883.28px;letter-spacing:0.84px;transform:scaleX(1.04)">29</span>
<span class="label" style="left:48.94px;top:880.28px;letter-spacing:0.14px;transform:scaleX(1.1)">Torreón, Coah.</span>
<span class="data" style="left:303.33px;top:883.28px;letter-spacing:0.58px;transform:scaleX(1.04)"><i>1</i>84,820</span>
<span class="data" style="left:445.37px;top:883.28px;letter-spacing:-0.23px;transform:scaleX(1.04)">242,6<i>1</i><i>1</i></span>
<span class="data" style="left:577.01px;top:883.28px;letter-spacing:0.72px;transform:scaleX(1.04)">284,544</span>
<span class="data" style="left:721.66px;top:883.28px;letter-spacing:0.17px;transform:scaleX(1.04)">99,724</span>
<span class="data" style="left:862.73px;top:883.28px;letter-spacing:-0.25px;transform:scaleX(1.04)">4<i>1</i>,933</span>
<span class="data" style="left:1000.05px;top:883.28px;letter-spacing:0.03px;transform:scaleX(1.04)">54.0%</span>
<span class="data" style="left:1141.65px;top:883.28px;letter-spacing:-0.88px;transform:scaleX(1.04)"><i>1</i>7.3%</span>
<span class="data" style="left:12.4px;top:910.28px;letter-spacing:1.38px;transform:scaleX(1.04)">30</span>
<span class="label" style="left:48.63px;top:907.28px;transform:scaleX(1.03)">San Luis Potosí, S.L.P</span>
<span class="data" style="left:307.38px;top:910.28px;letter-spacing:-0.17px;transform:scaleX(1.04)"><i>1</i>75,3<i>1</i>6</span>
<span class="data" style="left:440.21px;top:910.28px;letter-spacing:0.37px;transform:scaleX(1.04)">224,420</span>
<span class="data" style="left:579.65px;top:910.28px;letter-spacing:-0.09px;transform:scaleX(1.04)">257,560</span>
<span class="data" style="left:721px;top:910.28px;letter-spacing:0.44px;transform:scaleX(1.04)">82,244</span>
<span class="data" style="left:861.52px;top:910.28px;letter-spacing:0.14px;transform:scaleX(1.04)">33,<i>1</i>40</span>
<span class="data" style="left:1000.64px;top:910.28px;letter-spacing:-0.17px;transform:scaleX(1.04)">46.9%</span>
<span class="data" style="left:1139.87px;top:910.28px;letter-spacing:-0.02px;transform:scaleX(1.04)"><i>1</i>4.8%</span>
<span class="label rs" style="left:4.45px;top:936.68px;letter-spacing:0.26px;transform:scaleX(1.1)">Resto de aeropuertos</span>
<span class="data rs" style="left:303.09px;top:936.68px;letter-spacing:-0.44px;transform:scaleX(1.04)"><i>1</i>,789,<i>1</i>2<i>1</i></span>
<span class="data rs" style="left:434.19px;top:936.68px;letter-spacing:0.03px;transform:scaleX(1.04)">2,293,869</span>
<span class="data rs" style="left:571.4px;top:936.68px;letter-spacing:0.21px;transform:scaleX(1.04)">2,445,969</span>
<span class="data rs" style="left:715.76px;top:936.68px;letter-spacing:0.53px;transform:scaleX(1.04)">656,848</span>
<span class="data rs" style="left:858.47px;top:936.68px;letter-spacing:0.11px;transform:scaleX(1.04)"><i>1</i>52,<i>1</i>00</span>
<span class="data rs" style="left:1001.13px;top:936.68px;letter-spacing:-0.49px;transform:scaleX(1.04)">36.7%</span>
<span class="data rs" style="left:1143.9px;top:936.68px;letter-spacing:-0.7px;transform:scaleX(1.04)">6.6%</span>
<span class="tlabel" style="left:3.81px;top:962.84px;letter-spacing:0.93px;transform:scaleX(1.1)">Total</span>
<span class="tot" style="left:286.57px;top:963.44px;letter-spacing:0.73px;transform:scaleX(1.04)">43,989,767</span>
<span class="tot" style="left:426.39px;top:963.44px;letter-spacing:0.67px;transform:scaleX(1.04)">60,69<i>1</i>,379</span>
<span class="tot" style="left:564.61px;top:963.44px;letter-spacing:0.63px;transform:scaleX(1.04)">68,292,7<i>1</i>7</span>
<span class="tot" style="left:699.59px;top:963.44px;letter-spacing:0.9px;transform:scaleX(1.04)">24,302,950</span>
<span class="tot" style="left:846.11px;top:963.44px;letter-spacing:0.55px;transform:scaleX(1.04)">7,60<i>1</i>,338</span>
<span class="tot" style="left:998.89px;top:963.44px;letter-spacing:0.1px;transform:scaleX(1.04)">55.2%</span>
<span class="tot" style="left:1138.85px;top:963.44px;letter-spacing:0.02px;transform:scaleX(1.04)"><i>1</i>2.5%</span>
</div>
</body></html>
